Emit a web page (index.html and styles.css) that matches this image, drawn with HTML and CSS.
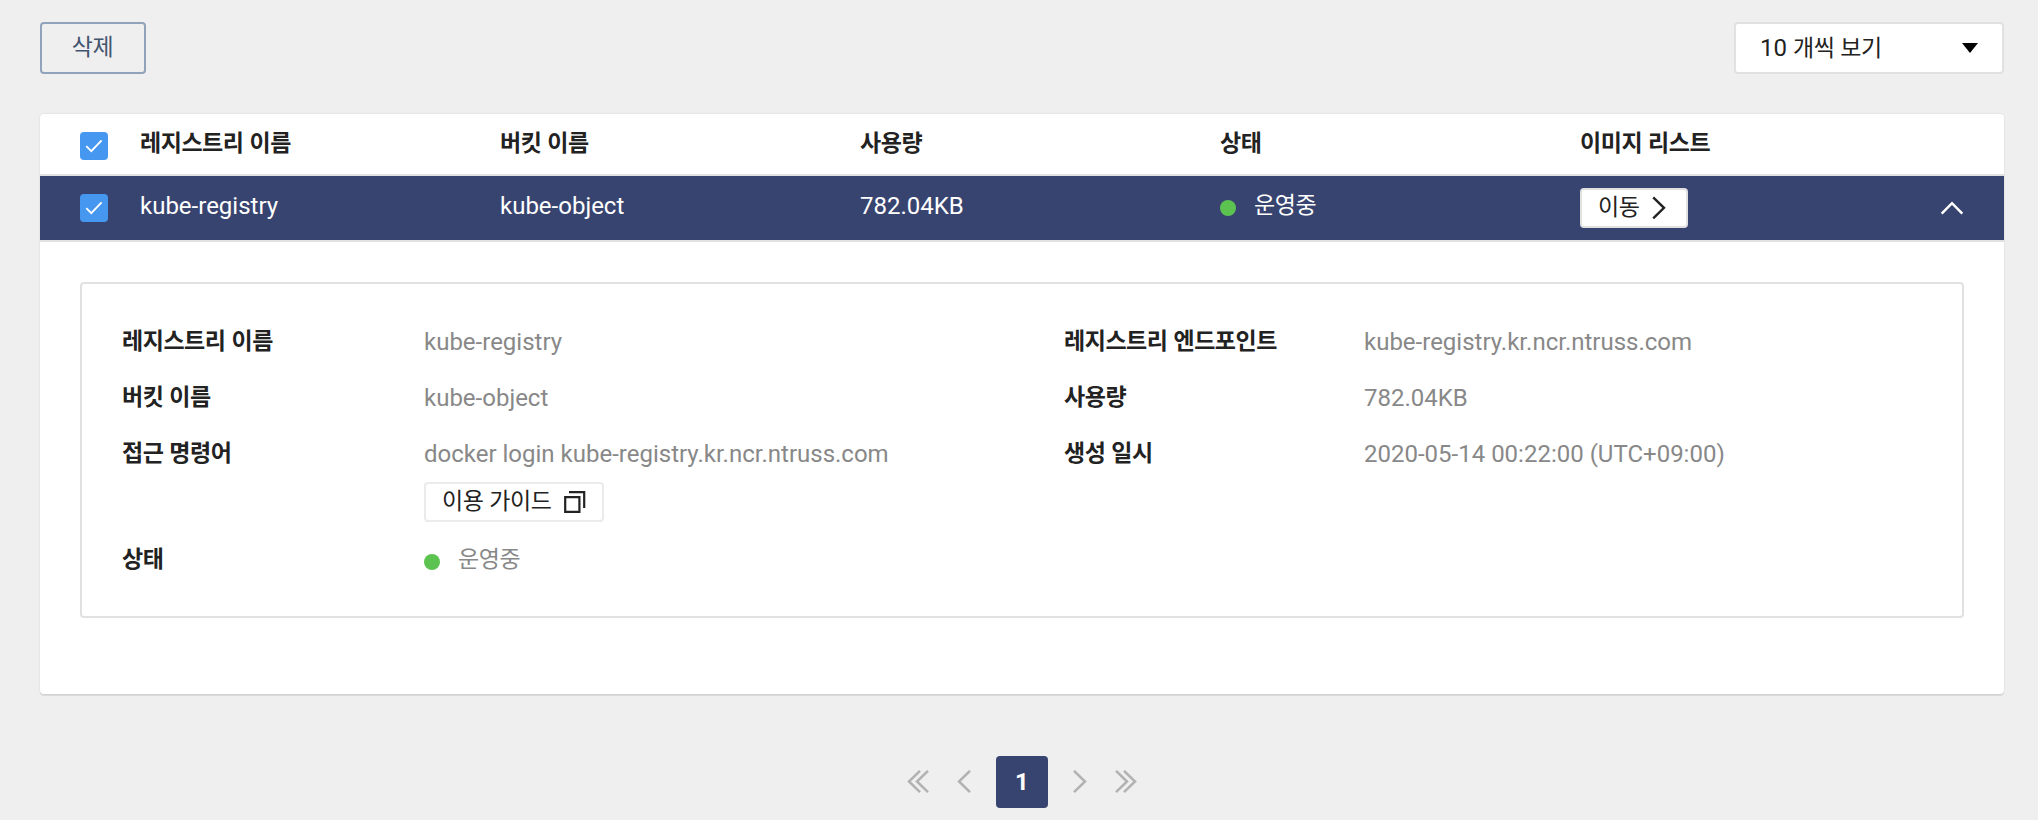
FILE: index.html
```html
<!DOCTYPE html>
<html lang="ko">
<head>
<meta charset="utf-8">
<title>Container Registry</title>
<link rel="stylesheet" href="styles.css">
</head>
<body>
<div class="toolbar">
  <button class="btn-delete"><span class="ko">삭제</span></button>
  <div class="select"><span>10 <span class="ko">개씩 보기</span></span><svg width="16" height="10" viewBox="0 0 16 10"><path d="M0 0H16L8 10Z" fill="#000"/></svg></div>
</div>

<section class="card">
  <div class="row head">
    <span class="check"><svg width="28" height="28" viewBox="0 0 28 28"><path d="M6.3 14.2L11.3 19.2L21.6 8.4" fill="none" stroke="#fff" stroke-width="1.9"/></svg></span>
    <span class="ko">레지스트리 이름</span>
    <span class="ko">버킷 이름</span>
    <span class="ko">사용량</span>
    <span class="ko">상태</span>
    <span class="ko">이미지 리스트</span>
  </div>
  <div class="row active">
    <span class="check"><svg width="28" height="28" viewBox="0 0 28 28"><path d="M6.3 14.2L11.3 19.2L21.6 8.4" fill="none" stroke="#fff" stroke-width="1.9"/></svg></span>
    <span class="cell">kube-registry</span>
    <span class="cell">kube-object</span>
    <span class="cell">782.04KB</span>
    <span class="status"><i class="dot"></i><span class="ko cell">운영중</span></span>
    <span><button class="btn-small btn-go"><span class="ko">이동</span><svg width="14" height="24" viewBox="0 0 14 24"><path d="M1.2 1.3L12 11.8L1.2 22.3" fill="none" stroke="#222" stroke-width="2.4"/></svg></button></span>
    <svg class="collapse" width="24" height="14" viewBox="0 0 24 14"><path d="M1.7 12.6L12 2.2L22.3 12.6" fill="none" stroke="#fff" stroke-width="2.5"/></svg>
  </div>
  <div class="detail">
    <dl class="info">
      <dt class="ko">레지스트리 이름</dt><dd>kube-registry</dd>
      <dt class="ko">레지스트리 엔드포인트</dt><dd>kube-registry.kr.ncr.ntruss.com</dd>
      <dt class="ko">버킷 이름</dt><dd>kube-object</dd>
      <dt class="ko">사용량</dt><dd>782.04KB</dd>
      <dt class="ko">접근 명령어</dt>
      <dd>docker login kube-registry.kr.ncr.ntruss.com
        <button class="btn-small btn-guide"><span class="ko">이용 가이드</span><svg width="22" height="22" viewBox="0 0 22 22"><path d="M1.2 6.2H15.4V20.8H1.2ZM5 1.2H20.2V17" fill="none" stroke="#222" stroke-width="2.2"/></svg></button>
      </dd>
      <dt class="ko">생성 일시</dt><dd>2020-05-14 00:22:00 (UTC+09:00)</dd>
      <dt class="ko">상태</dt><dd class="status"><i class="dot"></i><span class="ko">운영중</span></dd>
    </dl>
  </div>
</section>

<nav class="pager">
  <svg width="22" height="24" viewBox="0 0 22 24"><path d="M13 .8L2 11.5L13 22.2M21 .8L10 11.5L21 22.2"/></svg>
  <svg width="14" height="24" viewBox="0 0 14 24"><path d="M13 .8L2 11.5L13 22.2"/></svg>
  <span class="page">1</span>
  <svg width="14" height="24" viewBox="0 0 14 24"><path d="M1 .8L12 11.5L1 22.2"/></svg>
  <svg width="22" height="24" viewBox="0 0 22 24"><path d="M1 .8L12 11.5L1 22.2M9 .8L20 11.5L9 22.2"/></svg>
</nav>
</body>
</html>
```
FILE: styles.css
```css
* { box-sizing: border-box; }
body {
  margin: 0;
  height: 820px;
  padding: 22px 34px 0 40px;
  overflow: hidden;
  background: #efefef;
  color: #222;
  font: 24px/34px Roboto, "Noto Sans CJK KR", sans-serif;
}
svg { display: block; flex: none; }
button { font: inherit; color: inherit; margin: 0; }
.ko { font-size: 23px; letter-spacing: -.46px; word-spacing: .7px; }
.toolbar { display: flex; justify-content: space-between; height: 52px; }
.btn-delete {
  width: 106px; height: 52px; padding: 0 1px 1px 0;
  border: 2px solid #8fa3bb; border-radius: 4px;
  background: transparent; color: #42556f;
}
.select {
  display: flex; align-items: center; justify-content: space-between;
  width: 270px; padding: 0 24px;
  border: 2px solid #e1e1e1; border-radius: 4px; background: #fff;
}
.card {
  margin-top: 40px; height: 580px;
  background: #fff; border-radius: 4px;
  box-shadow: 0 0 1px 1px rgba(0, 0, 0, .04), 0 2px 0 #dadada;
}
.row {
  display: grid;
  grid-template-columns: 60px repeat(4, 360px) 1fr auto;
  align-items: center;
  padding: 0 40px;
}
.head { height: 62px; border-bottom: 2px solid #e1e1e1; font-weight: 700; }
.head .check { margin-top: 4px; }
.active { height: 66px; border-bottom: 2px solid #e1e1e1; background: #384470; color: #fff; }
.cell { padding-bottom: 4px; }
.check { width: 28px; height: 28px; border-radius: 4px; background: #4597f0; }
.status { display: flex; align-items: center; gap: 18px; }
.dot { width: 16px; height: 16px; border-radius: 50%; background: #5cc351; }
.btn-small {
  display: flex; align-items: center; height: 40px;
  padding: 0 0 0 16px;
  border: 2px solid #e1e1e1; border-radius: 4px;
  background: #fff; color: #222;
}
.btn-go { width: 108px; gap: 13px; }
.btn-guide { width: 180px; gap: 13px; margin-top: 11px; border-color: #ebebeb; }
.detail { padding: 40px 40px 0; }
.info {
  display: grid;
  grid-template-columns: 302px 640px 300px 1fr;
  grid-template-rows: 56px 56px 106px 56px;
  height: 336px; margin: 0; padding: 41px 40px 0;
  border: 2px solid #e1e1e1; border-radius: 4px;
}
.info dt { font-weight: 700; }
.info dd { margin: 0; color: #888; }
.info .status { height: 34px; }
.info .dot { margin-top: 4px; }
.pager { display: flex; align-items: center; justify-content: center; height: 52px; margin-top: 62px; }
.pager svg { fill: none; stroke: #b2b2b2; stroke-width: 2.5; }
.pager svg + svg { margin-left: 28px; }
.page {
  width: 52px; margin: 0 25px;
  border-radius: 4px; background: #384470; color: #fff;
  font-weight: 700; line-height: 52px; text-align: center;
}
```
